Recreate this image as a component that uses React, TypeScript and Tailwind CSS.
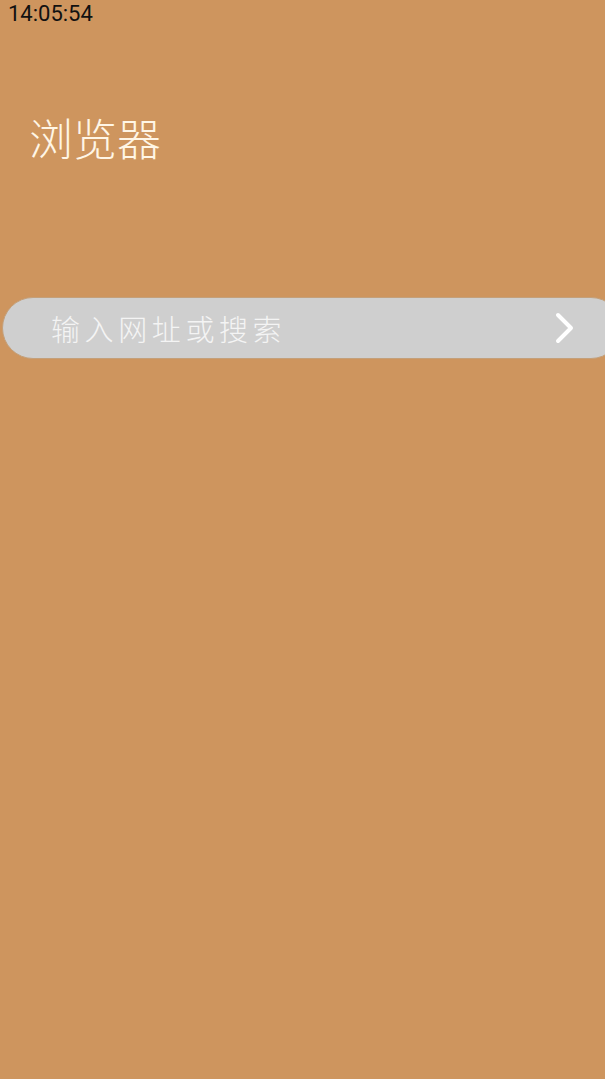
import { VFC } from 'react';

const cjk = { fontFamily: '"Noto Sans CJK SC", sans-serif' };

export const App: VFC = () => {
  return (
    <div className="w-[605px] h-[1079px] bg-[#ce955e] flex flex-col overflow-hidden">
      <div
        className="pl-[8px] pt-[1px] h-[24px] text-[22px] leading-[26px] text-[#111]"
        style={{ fontFamily: 'Roboto, sans-serif' }}
      >
        14:05:54
      </div>
      <div className="pl-[29px] pt-[87px] h-[273px]">
        <h1 className="text-[44px] leading-[52px] font-light text-[#fff6e6]" style={cjk}>
          浏览器
        </h1>
      </div>
      <div className="pl-[2px]">
        <div className="h-[62px] w-[620px] rounded-full bg-[#cfcfcf] border border-[#c4a07a] flex items-center justify-between pl-[48px] pr-[44px]">
          <span
            className="text-[29px] leading-[36px] tracking-[4.6px] font-light text-[#f4f4f4]"
            style={cjk}
          >
            输入网址或搜索
          </span>
          <svg width="24" height="34" viewBox="0 0 24 34">
            <path
              d="M5 4 L18 17 L5 30"
              fill="none"
              stroke="#ffffff"
              strokeWidth="4"
              strokeLinecap="round"
              strokeLinejoin="round"
            />
          </svg>
        </div>
      </div>
    </div>
  );
};

export default App;
